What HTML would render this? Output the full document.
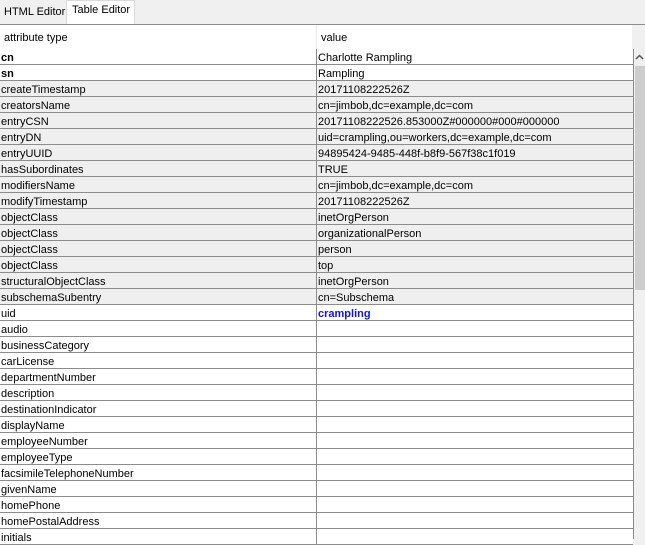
<!DOCTYPE html><html><head><style>
body{margin:0;width:645px;height:539px;overflow:hidden;background:#f0f0f0;font-family:"Liberation Sans",sans-serif;font-size:11px;color:#000;position:relative}
.tab{position:absolute;top:2px;height:20px;line-height:20px;white-space:nowrap}
.row{position:absolute;left:0;width:633px;height:15px;border-bottom:1px solid #8c8c8c;background:#fff}
.row.g{background:#efefef}
.row span{position:absolute;top:2px;line-height:14px;white-space:nowrap}
.row .a{left:1px}.row .v{left:318px}
.row:after{content:"";position:absolute;left:316px;top:0;width:1px;height:16px;background:#8c8c8c}
</style></head><body>
<div class="tab" style="left:4px;top:2px">HTML Editor</div>
<div style="position:absolute;left:66px;top:0;width:67px;height:24px;background:#fff;border:1px solid #d9d9d9;border-bottom:none"></div>
<div class="tab" style="left:72px;top:0px">Table Editor</div>
<div style="position:absolute;left:0;top:24px;width:645px;height:1px;background:#8c8c8c"></div>
<div style="position:absolute;left:0;top:25px;width:632px;height:24px;background:#fff"></div>
<div style="position:absolute;left:316px;top:25px;width:1px;height:24px;background:#e8e8e8"></div>
<div style="position:absolute;left:4px;top:32px;font-size:11px">attribute type</div>
<div style="position:absolute;left:321px;top:32px">value</div>
<div style="position:absolute;left:633px;top:49px;width:1px;height:490px;background:#8c8c8c"></div>
<div style="position:absolute;left:634px;top:49px;width:11px;height:490px;background:#f0f0f0"></div>
<svg style="position:absolute;left:635px;top:53px" width="9" height="8"><path d="M1 6L4.5 2.5L8 6" stroke="#555" stroke-width="1.5" fill="none"/></svg>
<div style="position:absolute;left:635px;top:66px;width:10px;height:224px;background:#cdcdcd"></div>
<div id="t"></div>
<script>
var d=[["cn","Charlotte Rampling",0,1],["sn","Rampling",0,1],["createTimestamp","20171108222526Z",1],["creatorsName","cn=jimbob,dc=example,dc=com",1],["entryCSN","20171108222526.853000Z#000000#000#000000",1],["entryDN","uid=crampling,ou=workers,dc=example,dc=com",1],["entryUUID","94895424-9485-448f-b8f9-567f38c1f019",1],["hasSubordinates","TRUE",1],["modifiersName","cn=jimbob,dc=example,dc=com",1],["modifyTimestamp","20171108222526Z",1],["objectClass","inetOrgPerson",1],["objectClass","organizationalPerson",1],["objectClass","person",1],["objectClass","top",1],["structuralObjectClass","inetOrgPerson",1],["subschemaSubentry","cn=Subschema",1],["uid","crampling",0,2],["audio"],["businessCategory"],["carLicense"],["departmentNumber"],["description"],["destinationIndicator"],["displayName"],["employeeNumber"],["employeeType"],["facsimileTelephoneNumber"],["givenName"],["homePhone"],["homePostalAddress"],["initials"]];
var h="";d.forEach(function(r,i){var y=49+16*i;var as=r[3]==1?"font-weight:bold":"";var vs=r[3]==2?"font-weight:bold;color:#1010f0":"";
h+='<div class="row'+(r[2]?' g':'')+'" style="top:'+y+'px"><span class="a" style="'+as+'">'+r[0]+'</span><span class="v" style="'+vs+'">'+(r[1]||"")+'</span></div>';});
document.getElementById("t").innerHTML=h;
</script>
</body></html>
